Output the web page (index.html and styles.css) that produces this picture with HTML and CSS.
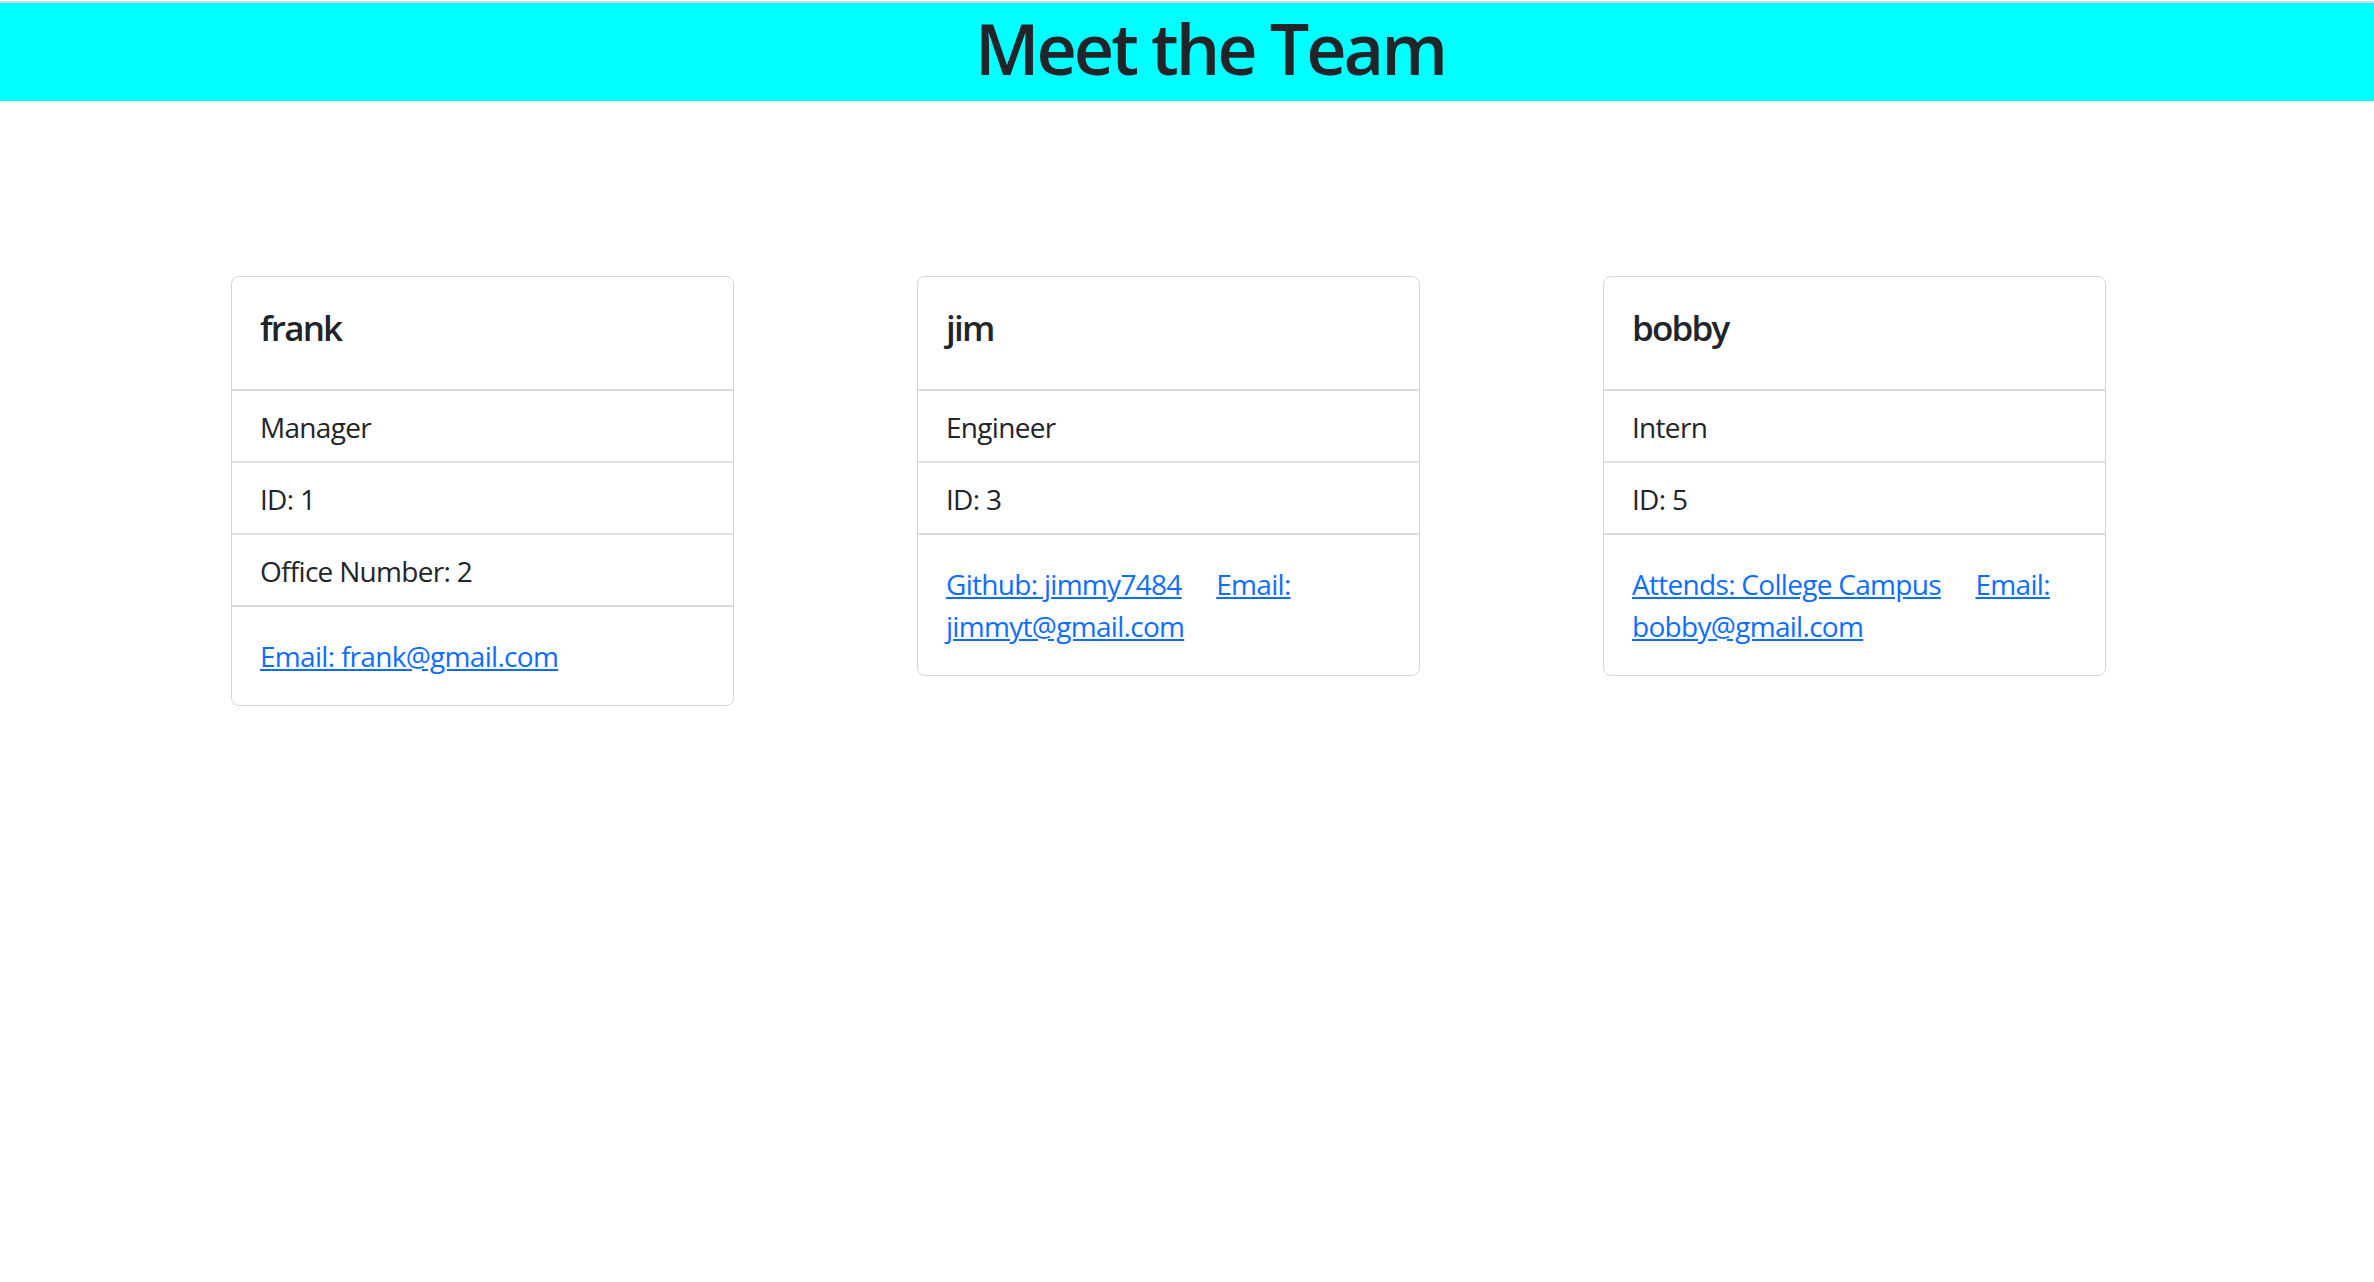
FILE: index.html
```html
<!DOCTYPE html>
<html lang="en">
<head>
<meta charset="UTF-8">
<title>Team Profile</title>
<link rel="stylesheet" href="styles.css">
</head>
<body>
<header class="banner">
  <h1 class="banner-title">Meet the Team</h1>
</header>
<main class="team">
  <section class="card">
    <div class="card-body">
      <h5 class="card-title">frank</h5>
    </div>
    <ul class="list-group">
      <li class="list-item">Manager</li>
      <li class="list-item">ID: 1</li>
      <li class="list-item">Office Number: 2</li>
    </ul>
    <div class="card-body links">
      <a href="#" class="card-link">Email: frank@gmail.com</a>
    </div>
  </section>
  <section class="card">
    <div class="card-body">
      <h5 class="card-title">jim</h5>
    </div>
    <ul class="list-group">
      <li class="list-item">Engineer</li>
      <li class="list-item">ID: 3</li>
    </ul>
    <div class="card-body links">
      <a href="#" class="card-link">Github: jimmy7484</a>
      <a href="#" class="card-link"><span class="link-part">Email:</span> <span class="link-part">jimmyt@gmail.com</span></a>
    </div>
  </section>
  <section class="card">
    <div class="card-body">
      <h5 class="card-title">bobby</h5>
    </div>
    <ul class="list-group">
      <li class="list-item">Intern</li>
      <li class="list-item">ID: 5</li>
    </ul>
    <div class="card-body links">
      <a href="#" class="card-link">Attends: College Campus</a>
      <a href="#" class="card-link"><span class="link-part">Email:</span> <span class="link-part">bobby@gmail.com</span></a>
    </div>
  </section>
</main>
</body>
</html>
```
FILE: styles.css
```css
* {
  box-sizing: border-box;
}

html, body {
  margin: 0;
  padding: 0;
  background: #ffffff;
}

body {
  font-family: "Segoe UI", "Open Sans", "Noto Sans", sans-serif;
  font-size: 28px;
  line-height: 42px;
  color: #212529;
  letter-spacing: -0.7px;
}

.banner {
  margin-top: 1px;
  border-top: 2px solid #d9d9d9;
  background: #00ffff;
  padding: 3px 0 11px 46px;
}

.banner-title {
  margin: 0;
  text-align: center;
  font-size: 70px;
  line-height: 84px;
  font-weight: 600;
  letter-spacing: -3px;
  color: #212529;
}

.team {
  display: flex;
  align-items: flex-start;
  gap: 183px;
  padding-left: 231px;
  margin-top: 175px;
}

.card {
  width: 503px;
  flex: 0 0 503px;
  border: 1px solid #d6d6d6;
  border-radius: 8px;
  background: #fff;
  overflow: hidden;
}

.card-body {
  padding: 28px;
}

.card-title {
  margin: 0 0 14px;
  padding-top: 2px;
  font-size: 35px;
  line-height: 42px;
  font-weight: 600;
  letter-spacing: -1.8px;
  color: #212529;
}

.list-group {
  list-style: none;
  margin: -2px 0 0;
  padding: 0;
  border-top: 2px solid #dcdcdc;
  border-bottom: 2px solid #dcdcdc;
}

.list-item {
  padding: 15px 28px 13px;
  border-bottom: 2px solid #e2e2e2;
}

.list-item:last-child {
  border-bottom: 0;
}

.card-link {
  color: #0d6efd;
  text-decoration: underline;
}

.card-link + .card-link {
  margin-left: 28px;
}
```
